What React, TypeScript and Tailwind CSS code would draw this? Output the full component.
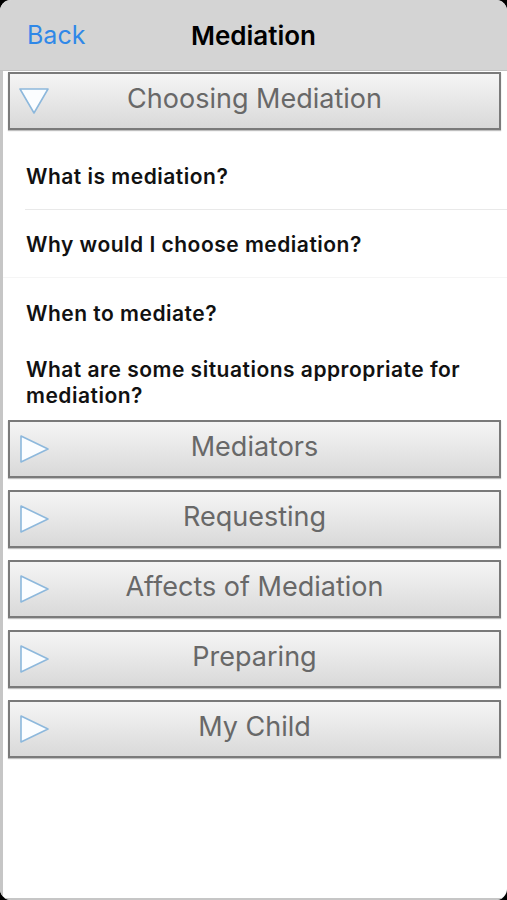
import React from 'react';

const SECTIONS = ['Mediators', 'Requesting', 'Affects of Mediation', 'Preparing', 'My Child'];

const Triangle: React.FC<{ open?: boolean }> = ({ open }) => (
  <svg width="32" height="32" viewBox="0 0 32 32" className="shrink-0">
    {open ? (
      <polygon points="2,4 30,4 16,28" fill="#fbfdff" stroke="#8db8dc" strokeWidth="1.6" strokeLinejoin="round" />
    ) : (
      <polygon points="3,3 3,29 30,16" fill="#fbfdff" stroke="#8db8dc" strokeWidth="1.6" strokeLinejoin="round" />
    )}
  </svg>
);

const SectionButton: React.FC<{ label: string; open?: boolean }> = ({ label, open }) => (
  <button className="ml-[8px] w-[493px] h-[58px] flex items-center relative border-2 border-[#7a7a7a] bg-gradient-to-b from-[#f5f5f5] to-[#d9d9d9] shadow-[0_1px_1px_rgba(0,0,0,0.25)]">
    <div className="absolute left-[8px] top-1/2 -translate-y-1/2">
      <Triangle open={open} />
    </div>
    <span className="flex-1 text-center text-[27px] text-[#686868] leading-none pb-[5px]">{label}</span>
  </button>
);

const App: React.FC = () => {
  return (
    <div className="w-[507px] h-[900px] bg-black" style={{ fontFamily: 'Inter, "Noto Sans", sans-serif' }}>
      <div className="h-full rounded-[11px] overflow-hidden bg-white flex flex-col">
        <header className="h-[71px] shrink-0 bg-[#d4d4d4] border-b border-[#c2c2c2] relative flex items-center justify-center">
          <span className="absolute left-[27px] top-[20px] text-[25px] text-[#2f88e8] leading-[30px]">Back</span>
          <h1 className="text-[26px] font-semibold text-black leading-none mt-[1px]">Mediation</h1>
        </header>

        <main className="flex-1 border-l-[3px] border-b-2 border-[#c6c6c6] pt-[1px]">
          <div className="-ml-[3px]">
            <SectionButton label="Choosing Mediation" open />
          </div>

          <div className="text-[21px] font-semibold text-[#111] leading-[24px] tracking-[0.5px]">
            <div className="h-[80px] pt-[35px] border-b border-[#e9e9e9] ml-[22px]">
              <span className="ml-[1px]">What is mediation?</span>
            </div>
            <div className="h-[68px] pt-[23px] pl-[23px] border-b border-[#f5f5f5]">Why would I choose mediation?</div>
            <div className="h-[60px] pt-[24px] pl-[23px]">When to mediate?</div>
            <div className="pt-[19px] pb-[11px] pl-[23px] pr-[30px] leading-[26px]">
              What are some situations appropriate for mediation?
            </div>
          </div>

          <div className="-ml-[3px] flex flex-col gap-[12px]">
            {SECTIONS.map((s) => (
              <SectionButton key={s} label={s} />
            ))}
          </div>
        </main>
      </div>
    </div>
  );
};

export default App;
